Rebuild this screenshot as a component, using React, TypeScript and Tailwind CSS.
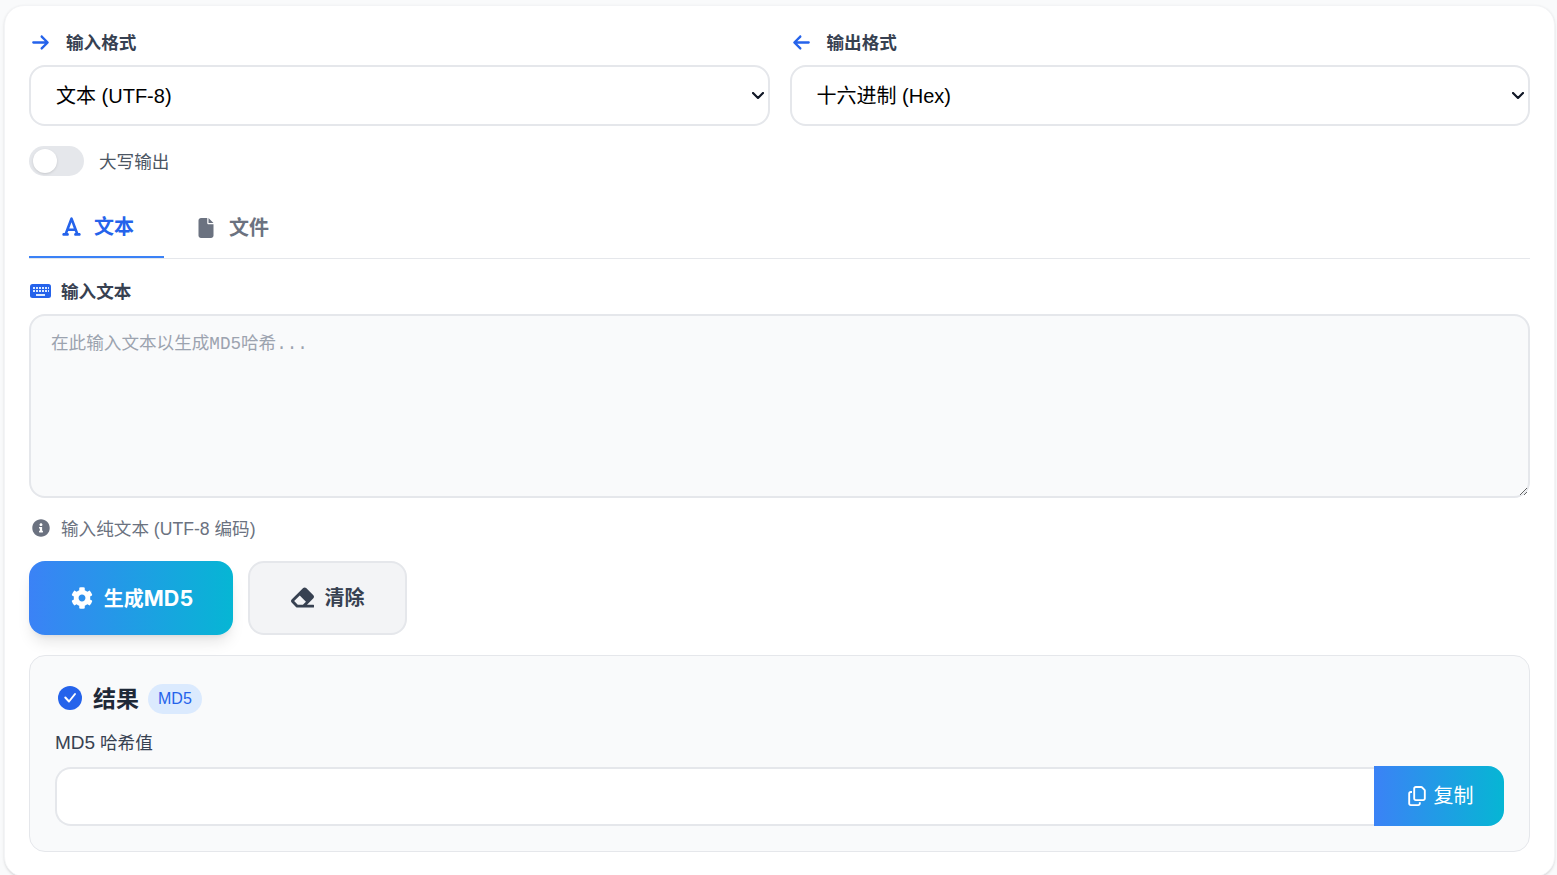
import { FaCog, FaEraser, FaInfoCircle } from "react-icons/fa";
import { FaArrowLeft, FaArrowRight, FaFile, FaFont, FaRegCopy } from "react-icons/fa6";

const SANS = "font-['Liberation_Sans','Noto_Sans_CJK_SC',sans-serif]";

const FormatSelect = ({ icon, label, options }: { icon: React.ReactNode; label: string; options: string[] }) => (
  <div className="flex-1 min-w-0">
    <label className="flex items-center h-[26px] mb-[10px] text-[17.6px] font-semibold text-[#374151]">
      <span className="w-[37px] pl-[2px] text-[#2563eb] text-[19px]">{icon}</span>
      <span className="mt-[2px]">{label}</span>
    </label>
    <div className="relative">
      <select className="block w-full h-[61px] pl-[25px] pr-[24px] appearance-none bg-white border-2 border-[#e5e7eb] rounded-[16px] text-[20px] text-black outline-none">
        {options.map((o) => (
          <option key={o}>{o}</option>
        ))}
      </select>
      <svg className="absolute right-[6px] top-[27px] w-[12px] h-[7px] pointer-events-none" viewBox="0 0 12 7" fill="none" stroke="#111827" strokeWidth="2.2" strokeLinecap="round" strokeLinejoin="round">
        <path d="M1 1l5 5 5-5" />
      </svg>
    </div>
  </div>
);

const KeyboardIcon = () => (
  <svg className="w-[21px] h-[14px]" viewBox="0 0 21 14">
    <rect width="21" height="14" rx="2.5" fill="#2563eb" />
    <path d="M3 3h2v2H3zM6 3h2v2H6zM9 3h2v2H9zM12 3h2v2h-2zM15 3h2v2h-2zM18 3h1v2h-1zM3 6h2v2H3zM6 6h2v2H6zM9 6h2v2H9zM12 6h2v2h-2zM15 6h2v2h-2zM18 6h1v2h-1zM6 10h9v2H6z" fill="#dbeafe" />
  </svg>
);

const CheckIcon = () => (
  <svg className="ml-[3px] -mt-[2px] w-[24px] h-[24px]" viewBox="0 0 24 24" fill="none">
    <circle cx="12" cy="12" r="12" fill="#2563eb" />
    <path d="M7.3 11.5l3.7 4 6-7.5" stroke="#fff" strokeWidth="2" strokeLinecap="round" strokeLinejoin="round" />
  </svg>
);

export default function App() {
  return (
    <div className={`${SANS} h-[875px] overflow-hidden bg-[#f9fafb] pl-[4px] pt-[5px] pr-[2px]`}>
      <div className="bg-white border border-[#f3f4f6] rounded-[20px] px-[24px] pt-[23px] pb-[24px] shadow-sm">
        <div className="flex gap-[20px]">
          <FormatSelect icon={<FaArrowRight />} label="输入格式" options={["文本 (UTF-8)", "十六进制 (Hex)", "Base64"]} />
          <FormatSelect icon={<FaArrowLeft />} label="输出格式" options={["十六进制 (Hex)", "Base64"]} />
        </div>

        <div className="flex items-center mt-[20px] h-[30px]">
          <div className="w-[55px] h-[30px] rounded-full bg-[#e5e7eb] p-[3px] pl-[4px]">
            <div className="w-[24px] h-[24px] rounded-full bg-white shadow" />
          </div>
          <span className="ml-[15px] mt-[2px] text-[17.6px] text-[#4b5563]">大写输出</span>
        </div>

        <div className="flex mt-[21px] border-b border-[#e5e7eb] h-[62px]">
          <div className="flex items-center justify-center gap-[12px] w-[135px] h-[61px] pl-[2px] border-b-2 border-[#3b82f6] text-[20px] font-semibold text-[#2563eb]">
            <FaFont className="text-[21px]" />
            文本
          </div>
          <div className="flex items-center justify-center gap-[13px] w-[135px] h-[61px] pl-[2px] text-[20px] font-semibold text-[#6b7280]">
            <FaFile className="text-[20px]" />
            文件
          </div>
        </div>

        <label className="flex items-center gap-[10px] mt-[19px] h-[26px] pl-[1px] text-[17.6px] font-semibold text-[#374151]">
          <KeyboardIcon />
          <span className="mt-[2px]">输入文本</span>
        </label>
        <textarea
          className="block w-full h-[184px] mt-[10px] px-[20px] py-[15px] bg-[#f9fafb] border-2 border-[#e5e7eb] rounded-[16px] font-['Liberation_Mono','Noto_Sans_CJK_SC',monospace] text-[17.6px] leading-[26px] placeholder:text-[#9ca3af] outline-none"
          placeholder="在此输入文本以生成MD5哈希..."
        />
        <div className="flex items-center gap-[11px] mt-[17px] h-[26px] pl-[3px] text-[17.6px] text-[#6b7280]">
          <FaInfoCircle className="text-[18px]" />
          <span className="mt-[2px]">输入纯文本 (UTF-8 编码)</span>
        </div>

        <div className="flex gap-[15px] mt-[20px]">
          <button className="flex items-center justify-center gap-[11px] w-[204px] h-[74px] pl-[2px] rounded-[16px] bg-linear-to-r/srgb from-[#3b82f6] to-[#06b6d4] text-[20px] font-bold text-white shadow-lg">
            <FaCog className="text-[22px]" />
            <span>
              生成<span className="font-['Inter',sans-serif] text-[21.5px]">MD5</span>
            </span>
          </button>
          <button className="flex items-center justify-center gap-[11px] w-[159px] h-[74px] rounded-[16px] bg-[#f3f4f6] border-2 border-[#e5e7eb] text-[20px] font-bold text-[#374151]">
            <FaEraser className="text-[23px] -mt-[2px]" />
            清除
          </button>
        </div>

        <div className="mt-[20px] bg-[#f9fafb] border border-[#e5e7eb] rounded-[16px] px-[25px] pt-[27px] pb-[25px]">
          <div className="flex items-center h-[32px]">
            <CheckIcon />
            <span className="ml-[11px] text-[23px] font-bold text-[#1f2937]">结果</span>
            <span className="ml-[9px] flex items-center h-[30px] px-[10px] rounded-full bg-[#dbeafe] text-[16px] text-[#2563eb]">MD5</span>
          </div>
          <div className="mt-[14px] h-[27px] text-[17.6px] text-[#374151]">
            <span className="text-[19px]">MD5</span> 哈希值
          </div>
          <div className="flex mt-[10px] h-[60px]">
            <input className="flex-1 min-w-0 mt-[1px] bg-white border-2 border-r-0 border-[#e5e7eb] rounded-l-[16px] outline-none" readOnly />
            <button className="flex items-center justify-center gap-[7px] w-[130px] pl-[2px] rounded-r-[16px] bg-linear-to-r/srgb from-[#3b82f6] to-[#06b6d4] text-[20px] text-white">
              <FaRegCopy className="text-[20px]" />
              复制
            </button>
          </div>
        </div>
      </div>
    </div>
  );
}
